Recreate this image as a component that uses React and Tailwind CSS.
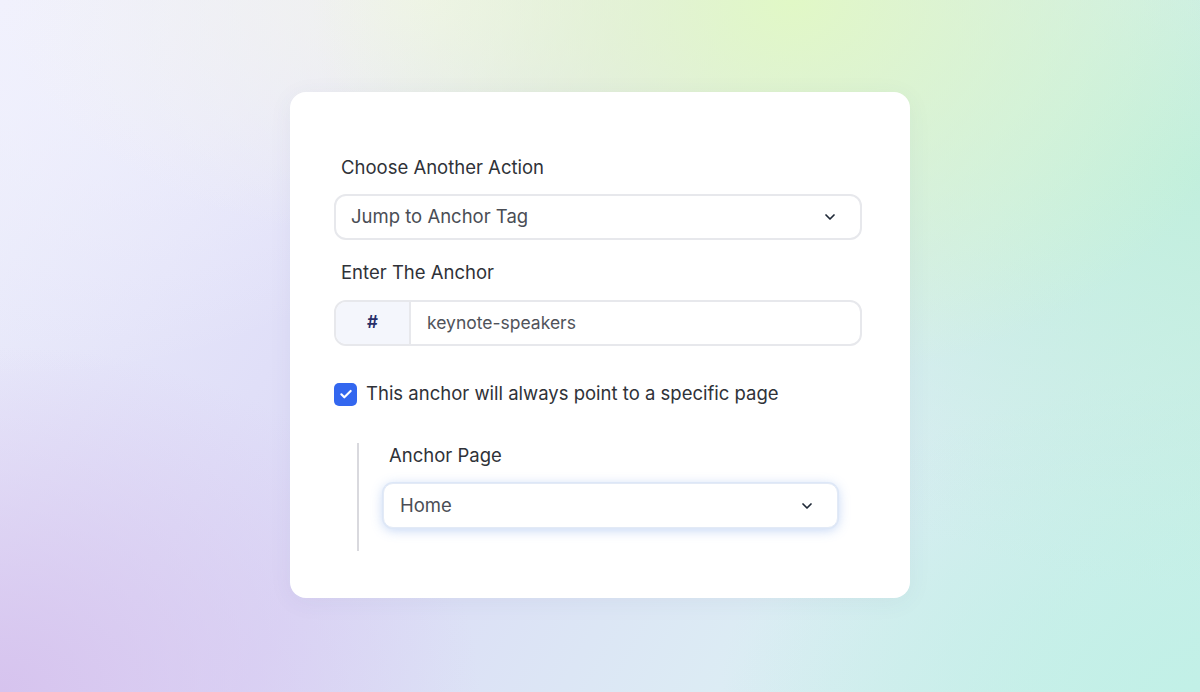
import React from 'react';

function Chevron() {
  return (
    <svg width="16" height="16" viewBox="0 0 24 24" fill="none" stroke="#1f2937" strokeWidth="2.6" strokeLinecap="round" strokeLinejoin="round">
      <path d="M6 9l6 6 6-6" />
    </svg>
  );
}

export default function App() {
  return (
    <div
      className="w-full h-[692px] pb-[2px] flex items-center justify-center font-['Inter','Noto_Sans',sans-serif] bg-[radial-gradient(ellipse_40%_55%_at_66%_0%,#e1f8c6_0%,transparent_100%),radial-gradient(ellipse_35%_35%_at_35%_0%,#f2f3ee_0%,transparent_100%),radial-gradient(ellipse_45%_60%_at_100%_25%,#c1efdd_0%,transparent_100%),radial-gradient(ellipse_40%_50%_at_0%_100%,#d6c3ee_0%,transparent_100%),radial-gradient(ellipse_45%_55%_at_0%_0%,#f1f1fd_0%,transparent_100%),radial-gradient(ellipse_40%_45%_at_100%_100%,#c2f0e7_0%,transparent_100%),linear-gradient(120deg,#eceefb_0%,#dcdaf7_40%,#dcecf4_70%,#c6efe6_100%)]"
    >
      <div className="w-[620px] h-[506px] bg-white rounded-[16px] shadow-[0_4px_24px_rgba(60,80,120,0.06)] pt-[63px] pl-[44px] pr-[48px] pb-[47px] flex flex-col">
        <label className="pl-[7px] h-6 leading-6 text-[18.5px] text-[#2f3238]">Choose Another Action</label>
        <div className="mt-[15px] h-[46px] rounded-[12px] border-2 border-[#e7e8ec] flex items-center justify-between pl-[15px] pr-[22px]">
          <span className="text-[18.5px] text-[#4a4d55]">Jump to Anchor Tag</span>
          <Chevron />
        </div>

        <label className="mt-5 pl-[7px] h-6 leading-6 text-[18.5px] text-[#2f3238]">Enter The Anchor</label>
        <div className="mt-4 h-[46px] rounded-[12px] border-2 border-[#e7e8ec] flex overflow-hidden">
          <div className="w-[75px] bg-[#f4f6fc] border-r-2 border-[#e7e8ec] flex items-center justify-center text-[17px] font-semibold text-[#272e68]">
            #
          </div>
          <div className="flex-1 flex items-center pl-[16px] text-[17.5px] text-[#50535a]">keynote-speakers</div>
        </div>

        <div className="mt-9 h-6 flex items-center gap-[9px]">
          <span className="w-[23px] h-[23px] rounded-[5px] bg-[#3367ef] flex items-center justify-center">
            <svg width="16" height="16" viewBox="0 0 24 24" fill="none" stroke="white" strokeWidth="3.2" strokeLinecap="round" strokeLinejoin="round">
              <path d="M5 12.5l4.5 4.5L19 7.5" />
            </svg>
          </span>
          <span className="text-[18.5px] text-[#2f3238]">This anchor will always point to a specific page</span>
        </div>

        <div className="mt-[37px] ml-[23px] mr-6 h-[108px] border-l-2 border-[#d9d9de] pl-6 flex flex-col">
          <label className="pl-[6px] h-6 leading-6 text-[18.5px] text-[#2f3238]">Anchor Page</label>
          <div className="mt-[16px] h-[45px] rounded-[10px] bg-white border border-[#e3eaf6] shadow-[0_0_0_1px_#dde7f7,0_2px_12px_rgba(90,140,225,0.38)] flex items-center justify-between pl-[16px] pr-[22px]">
            <span className="text-[18.5px] text-[#4a4d55]">Home</span>
            <Chevron />
          </div>
        </div>
      </div>
    </div>
  );
}
